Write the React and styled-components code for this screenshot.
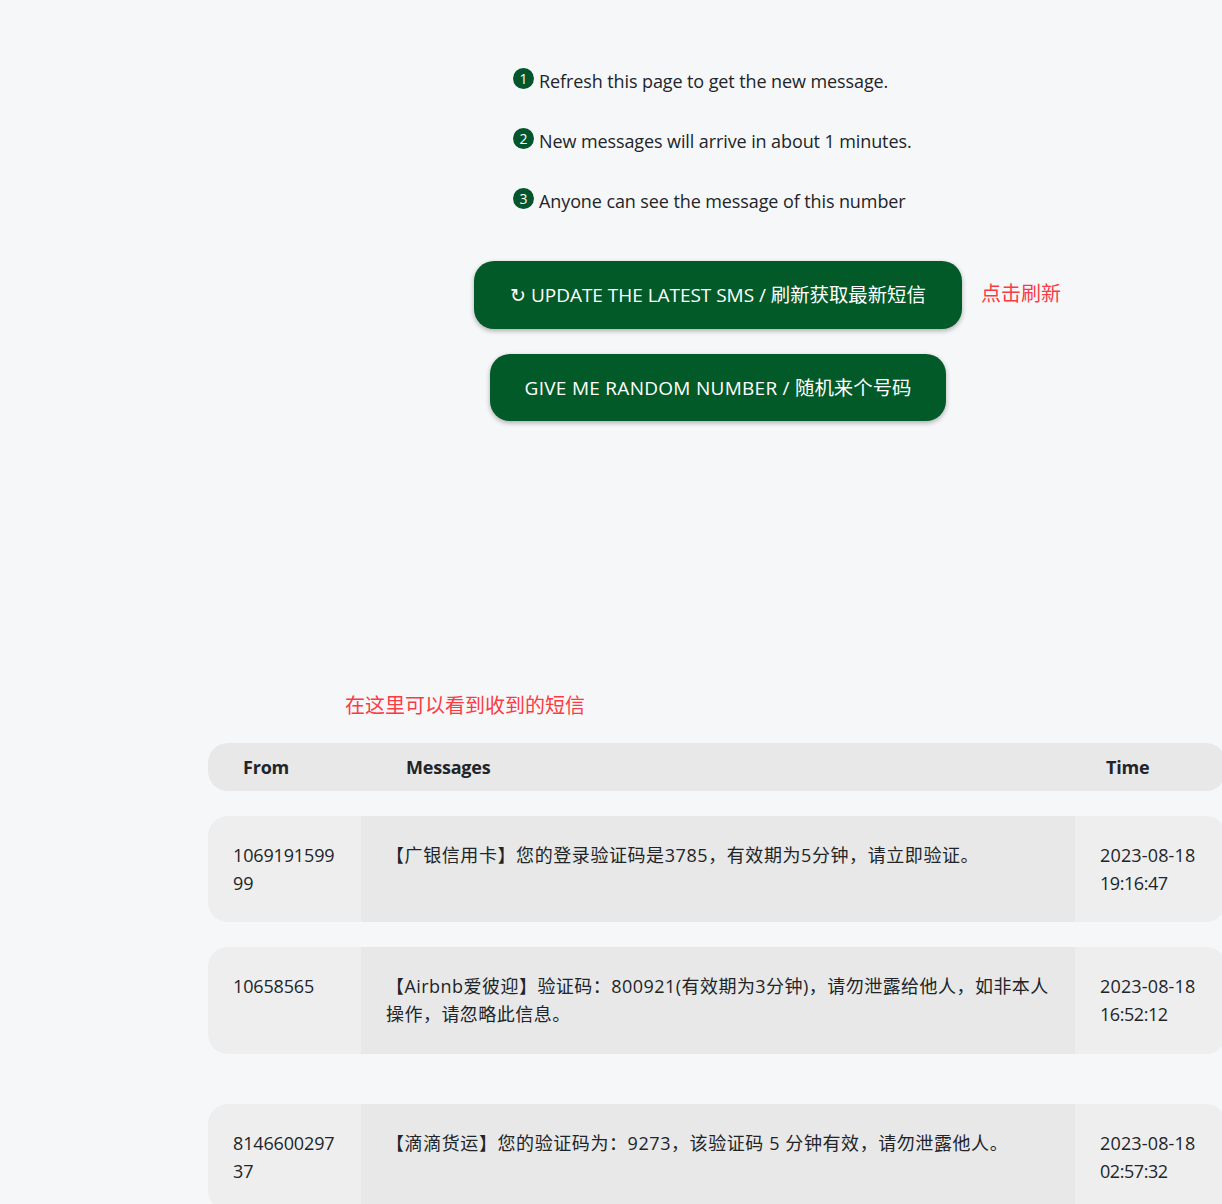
import React from "react";
import styled, { createGlobalStyle } from "styled-components";

const Global = createGlobalStyle`
  html, body { margin: 0; padding: 0; background: #f6f7f9; overflow: hidden; }
  body { font-family: "Open Sans", "Noto Sans CJK SC", sans-serif; color: #212529; }
`;
const Page = styled.div`
  width: 1222px; height: 1204px; overflow: hidden; padding: 67px 0 0 208px; box-sizing: border-box;
`;
const Content = styled.div`width: 1020px;`;
const Steps = styled.ol`
  list-style: none; margin: 0 0 0 305px; padding: 0; display: flex; flex-direction: column; gap: 32px;
`;
const Step = styled.li`
  display: flex; align-items: flex-start; height: 28px; font-size: 18px; line-height: 28px; gap: 5px; letter-spacing: -0.1px;
`;
const Badge = styled.span`
  display: flex; align-items: center; justify-content: center; flex: none;
  width: 21px; height: 21px; margin-top: 1px; border-radius: 50%;
  background: #03562b; color: #fff; font-family: "Open Sans", sans-serif; font-size: 14px; line-height: 1; letter-spacing: 0;
`;
const ButtonRow = styled.div`
  display: grid; grid-template-columns: 1fr auto 1fr; align-items: center; margin-top: ${p => p.$top}px;
`;
const Action = styled.button`
  grid-column: 2; border: 0; border-radius: 20px; background: #035a29; color: #fff; cursor: pointer;
  font-family: "Open Sans", "Noto Sans CJK SC", sans-serif; font-size: 19px; letter-spacing: ${p => p.$ls}px;
  height: ${p => p.$h}px; width: ${p => p.$w}px; padding: 0 0 ${p => p.$pb}px; white-space: nowrap;
  box-shadow: 0 2px 5px rgba(0,0,0,.3);
`;
const Han = styled.span`
  font-size: 19.4px; letter-spacing: 0;
`;
const Note = styled.span`
  font-size: 20px; color: #fb3b44; margin-left: 19px; margin-top: -5px; font-family: "Noto Sans CJK SC", sans-serif;
`;
const Caption = styled.div`
  font-size: 20px; line-height: 28px; color: #fb3b44; margin: 270px 0 0 137px; font-family: "Noto Sans CJK SC", sans-serif;
`;
const Table = styled.div`
  display: flex; flex-direction: column; margin-top: 24px; width: 1018px; font-size: 18px; line-height: 28px;
`;
const Row = styled.div`
  display: grid; grid-template-columns: 153px 714px 1fr; border-radius: 20px; overflow: hidden;
  margin-top: ${p => p.$top}px; min-height: ${p => p.$h}px;
`;
const Head = styled.div`
  background: #e8e8e8; font-weight: 700; height: 48px; line-height: 48px; padding-left: ${p => p.$pad}px;
  font-size: 18px; letter-spacing: -0.2px;
`;
const Side = styled.div`
  background: #eeeeee; padding: 25px 20px 25px 25px; word-break: break-all; letter-spacing: -0.15px;
`;
const Body = styled.div`
  background: #e8e8e8; padding: 25px 20px 25px 25px; letter-spacing: ${p => p.$ls}px;
`;
const DateText = styled.div`letter-spacing: 0.15px;`;
const ClockText = styled.div`letter-spacing: -0.45px;`;

const rows = [
  { top: 25, h: 106, ls: 0.58, from: "106919159999", msg: "【广银信用卡】您的登录验证码是3785，有效期为5分钟，请立即验证。", d: "2023-08-18", t: "19:16:47" },
  { top: 25, h: 107, ls: 0.46, from: "10658565", msg: "【Airbnb爱彼迎】验证码：800921(有效期为3分钟)，请勿泄露给他人，如非本人操作，请忽略此信息。", d: "2023-08-18", t: "16:52:12" },
  { top: 50, h: 107, ls: 0.58, from: "814660029737", msg: "【滴滴货运】您的验证码为：9273，该验证码 5 分钟有效，请勿泄露他人。", d: "2023-08-18", t: "02:57:32" },
];

export default function App() {
  return (
    <Page>
      <Global />
      <Content>
        <Steps>
          <Step><Badge>1</Badge>Refresh this page to get the new message.</Step>
          <Step><Badge>2</Badge>New messages will arrive in about 1 minutes.</Step>
          <Step><Badge>3</Badge>Anyone can see the message of this number</Step>
        </Steps>
        <ButtonRow $top={46}>
          <Action $w={488} $h={68} $ls={-0.03} $pb={4}>↻ UPDATE THE LATEST SMS / <Han>刷新获取最新短信</Han></Action>
          <Note>点击刷新</Note>
        </ButtonRow>
        <ButtonRow $top={25}>
          <Action $w={456} $h={67} $ls={0.28} $pb={2}>GIVE ME RANDOM NUMBER / <Han>随机来个号码</Han></Action>
        </ButtonRow>
        <Caption>在这里可以看到收到的短信</Caption>
        <Table>
          <Row $top={0} $h={48}>
            <Head $pad={35}>From</Head>
            <Head $pad={45}>Messages</Head>
            <Head $pad={31}>Time</Head>
          </Row>
          {rows.map(r => (
            <Row key={r.from} $top={r.top} $h={r.h}>
              <Side>{r.from}</Side>
              <Body $ls={r.ls}>{r.msg}</Body>
              <Side><DateText>{r.d}</DateText><ClockText>{r.t}</ClockText></Side>
            </Row>
          ))}
        </Table>
      </Content>
    </Page>
  );
}
